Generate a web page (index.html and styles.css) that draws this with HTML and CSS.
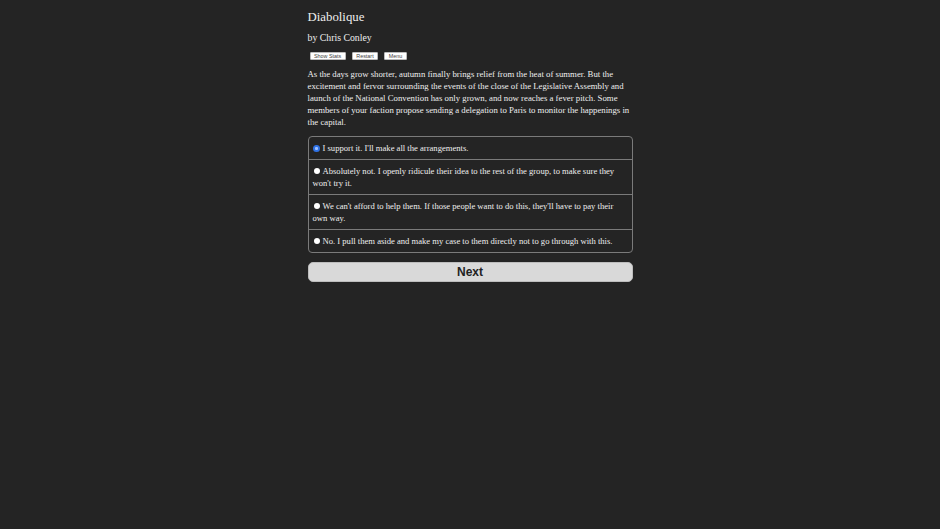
FILE: index.html
```html
<!DOCTYPE html>
<html>
<head>
<meta charset="utf-8">
<link rel="stylesheet" href="styles.css">
</head>
<body>
<div class="container">
  <h1 class="title">Diabolique</h1>
  <h2 class="author">by Chris Conley</h2>
  <div class="buttons">
    <button class="spacedLink">Show Stats</button>
    <button class="spacedLink">Restart</button>
    <button class="spacedLink">Menu</button>
  </div>
  <p class="text">As the days grow shorter, autumn finally brings relief from the heat of summer. But the excitement and fervor surrounding the events of the close of the Legislative Assembly and launch of the National Convention has only grown, and now reaches a fever pitch. Some members of your faction propose sending a delegation to Paris to monitor the happenings in the capital.</p>
  <div class="choices">
    <label class="choice"><span class="radio checked"></span>I support it. I'll make all the arrangements.</label>
    <label class="choice"><span class="radio"></span>Absolutely not. I openly ridicule their idea to the rest of the group, to make sure they won't try it.</label>
    <label class="choice"><span class="radio"></span>We can't afford to help them. If those people want to do this, they'll have to pay their own way.</label>
    <label class="choice"><span class="radio"></span>No. I pull them aside and make my case to them directly not to go through with this.</label>
  </div>
  <button class="next">Next</button>
</div>
</body>
</html>
```
FILE: styles.css
```css
html, body {
  margin: 0;
  padding: 0;
  background: #242424;
}
body {
  color: #eeeeee;
  font-family: "Liberation Serif", "DejaVu Serif", serif;
}
.container {
  width: 325px;
  margin: 0 auto;
  padding-top: 9px;
}
.title {
  font-size: 12.8px;
  font-weight: normal;
  margin: 0;
  line-height: 16px;
}
.author {
  font-size: 9.8px;
  font-weight: normal;
  margin: 6px 0 0;
  line-height: 14px;
}
.buttons {
  display: flex;
  gap: 6px;
  margin: 7px 0 0 2px;
}
.spacedLink {
  font-family: "Liberation Sans", Arial, sans-serif;
  font-size: 5.4px;
  line-height: 5px;
  height: 8px;
  padding: 0 3.5px;
  background: #ffffff;
  color: #444;
  border: 1px solid #bbb;
  border-radius: 1px;
}
.text {
  font-size: 8.75px;
  line-height: 11.9px;
  margin: 9px 0 0;
}
.choices {
  margin-top: 7px;
  border: 1px solid #7a7a7a;
  border-radius: 4px;
}
.choice {
  display: block;
  font-size: 8.6px;
  line-height: 12px;
  padding: 5px 4px 5px 4px;
  border-top: 1px solid #7a7a7a;
}
.choice:first-child {
  border-top: none;
}
.radio {
  display: inline-block;
  width: 6px;
  height: 6px;
  border-radius: 50%;
  background: #fff;
  margin: 0 3px 0 1px;
  vertical-align: -0.5px;
}
.radio.checked {
  width: 7px;
  height: 7px;
  margin: 0 2.5px 0 0.5px;
  vertical-align: -1px;
  background: radial-gradient(circle, #9dc0ff 0, #9dc0ff 1.2px, #2f72e6 2px);
}
.next {
  display: block;
  width: 325px;
  height: 20px;
  margin-top: 9px;
  background: #d9d9d9;
  border: 1px solid #bdbdbd;
  border-radius: 5px;
  font-family: "Liberation Sans", Arial, sans-serif;
  font-weight: bold;
  font-size: 12px;
  color: #222;
  padding: 0;
}
```
